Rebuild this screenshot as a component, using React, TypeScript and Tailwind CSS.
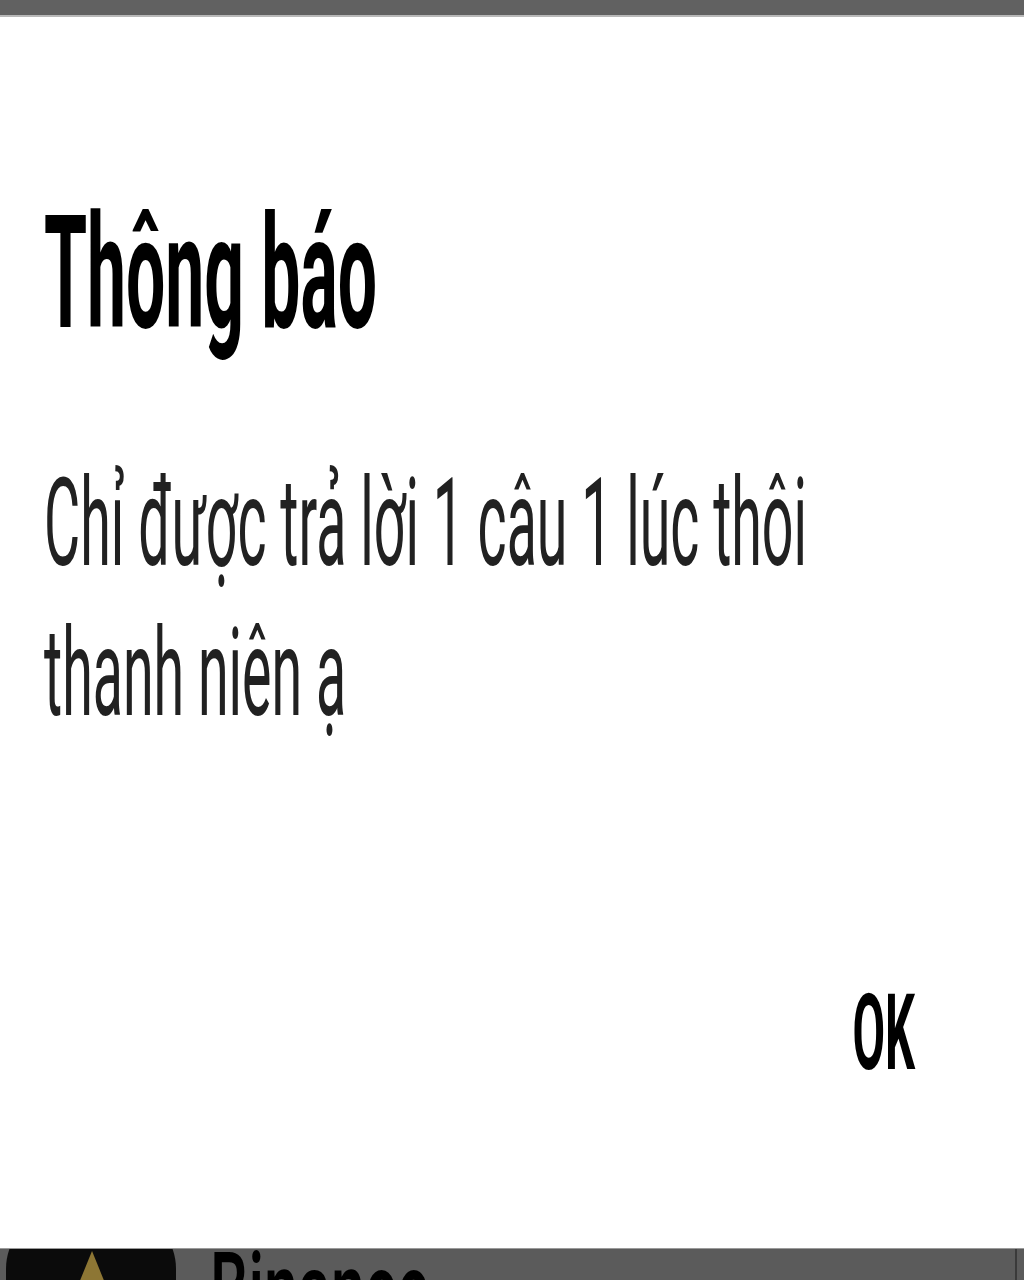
export default function App() {
  return (
    <div className="flex h-[1280px] w-[1024px] flex-col overflow-hidden bg-white font-['Roboto','Noto_Sans',sans-serif]">
      {/* status strip */}
      <div className="h-[17px] shrink-0 border-b-2 border-[#b8b8b8] bg-[#616161]" />

      {/* dialog */}
      <div className="relative flex flex-1 flex-col bg-white pl-[44px] pr-[109px]">
        <div className="mt-[178px] h-[157px] whitespace-nowrap">
          <h1 className="origin-left scale-x-[0.443] text-[157px] font-bold leading-[157px] text-black">Thông báo</h1>
        </div>

        <div className="mt-[97px] text-[#212121]">
          <p className="h-[150px] origin-left scale-x-[0.455] whitespace-nowrap text-[122px] leading-[150px]">
            Chỉ được trả lời 1 câu 1 lúc thôi
          </p>
          <p className="h-[150px] origin-left scale-x-[0.455] whitespace-nowrap text-[122px] leading-[150px]">
            thanh niên ạ
          </p>
        </div>

        <div className="mt-[232px] flex justify-end">
          <button className="origin-right scale-x-[0.45] whitespace-nowrap text-[105px] font-bold leading-[105px] text-black">
            OK
          </button>
        </div>
      </div>

      {/* app behind the dialog */}
      <div className="relative flex h-[32px] shrink-0 items-start overflow-hidden border-t border-[#9a9a9a] bg-[#5b5b5b]">
        <div className="relative ml-[6px] mt-[-40px] h-[170px] w-[170px] shrink-0 rounded-[60px] bg-[#0b0b0b]">
          <svg className="absolute left-[72px] top-[42px]" width="28" height="32" viewBox="0 0 28 32">
            <polygon points="14,0 27,32 1,32" fill="#8d7634" />
          </svg>
        </div>
        <span className="ml-[34px] mt-[-10px] origin-top scale-y-[1.7] text-[61px] font-medium leading-none text-black">Binance</span>
        <div className="absolute right-[7px] top-0 h-full w-[2px] bg-[#3a3a3a]" />
      </div>
    </div>
  );
}
